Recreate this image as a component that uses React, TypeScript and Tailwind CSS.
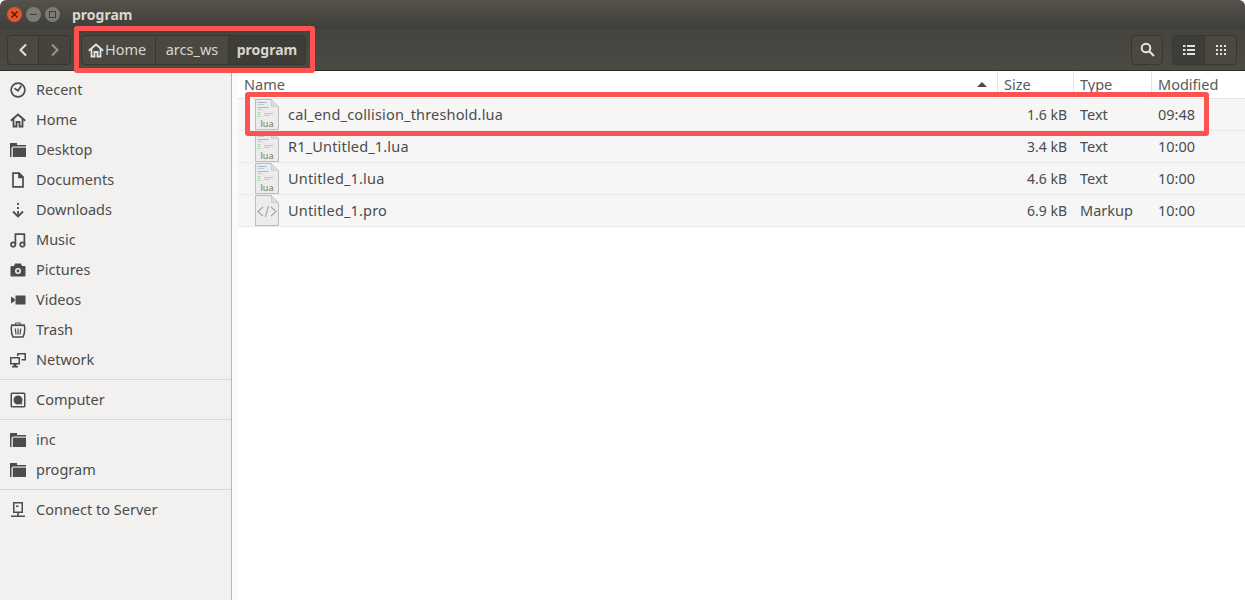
import React from "react";

const Clock = () => (
  <svg width="16" height="16" viewBox="0 0 16 16" fill="none" stroke="#4c4c4c" strokeWidth="1.7">
    <circle cx="8" cy="8" r="6.9" />
    <path d="M4.500 6.200 8 8.800l3.300-5" />
  </svg>
);
const HomeIcon = ({ color = "#4c4c4c" }: { color?: string }) => (
  <svg width="16" height="16" viewBox="0 0 16 16" fill="none" stroke={color} strokeWidth="2">
    <path d="M.8 8.800 8 2.600l7.200 6.200" />
    <path d="M3.500 7v7.500h3V10h3v4.500h3V7" strokeWidth="1.800" />
  </svg>
);
const Folder = () => (
  <svg width="16" height="16" viewBox="0 0 16 16" fill="#4c4c4c">
    <path d="M0 1h7v2h9v1.400H3.500a2 2 0 0 0-2 2V15H0z" />
    <path d="M2.800 5.600H16V15H2.800z" />
  </svg>
);
const Doc = () => (
  <svg width="16" height="16" viewBox="0 0 16 16" fill="none" stroke="#4c4c4c" strokeWidth="1.700">
    <path d="M3 1.200h6.200l3.800 3.800v9.800H3z" />
    <path d="M9 1v4.400h4.200" fill="#4c4c4c" />
  </svg>
);
const Download = () => (
  <svg width="16" height="16" viewBox="0 0 16 16" fill="none" stroke="#4c4c4c" strokeWidth="1.800">
    <path d="M8 1v2M8 5v2M8 9v3.500M3 9.500l5 5 5-5" />
  </svg>
);
const Music = () => (
  <svg width="16" height="16" viewBox="0 0 16 16" fill="none" stroke="#4c4c4c" strokeWidth="1.700">
    <circle cx="3.200" cy="12.600" r="2.200" />
    <circle cx="12.400" cy="12.600" r="2.200" />
    <path d="M5.400 12.600V2.200h9v10.400" />
  </svg>
);
const Camera = () => (
  <svg width="16" height="16" viewBox="0 0 16 16" fill="#4c4c4c">
    <path fillRule="evenodd" d="M5 1.500h6L12 4h2.500a1 1 0 0 1 1 1v8.500a1 1 0 0 1-1 1h-13a1 1 0 0 1-1-1V5a1 1 0 0 1 1-1H4zM8 6a3 3 0 1 0 0 6 3 3 0 0 0 0-6z" />
    <circle cx="8" cy="9" r="1.400" />
  </svg>
);
const Video = () => (
  <svg width="16" height="16" viewBox="0 0 16 16" fill="#4c4c4c">
    <path d="M5.500 3.500H15.500v9H5.500z" />
    <path d="M1 4.500 4.800 7v2L1 11.500z" />
  </svg>
);
const Trash = () => (
  <svg width="16" height="16" viewBox="0 0 16 16" fill="none" stroke="#4c4c4c" strokeWidth="1.200">
    <path d="M1 3.200h14" strokeWidth="1.800" />
    <path d="M5 2.500 6 1h4l1 1.500" />
    <path d="M1.500 4c-.5 4 0 8 1.500 11h10c1.500-3 2-7 1.500-11" strokeWidth="1.500" />
    <path d="M5.300 6.500 6 12.500M8 6.500v6M10.700 6.500 10 12.500" />
  </svg>
);
const NetworkIcon = () => (
  <svg width="16" height="16" viewBox="0 0 16 16" fill="#4c4c4c">
    <path fillRule="evenodd" d="M0 5h10v7.500H6.500V14H8v1.500H2V14h1.500v-1.500H0zM1.500 6.500V11h7V6.500z" />
    <path d="M7 1h9v7.500h-4.500V7H14.500V2.500h-6V4H7z" />
  </svg>
);
const Disk = () => (
  <svg width="16" height="16" viewBox="0 0 16 16" fill="#4c4c4c">
    <path fillRule="evenodd" d="M2 .5h12a1.500 1.500 0 0 1 1.500 1.500v12a1.500 1.500 0 0 1-1.500 1.500H2A1.500 1.500 0 0 1 .5 14V2A1.500 1.500 0 0 1 2 .5zM2 2v12h12V2zM8 3.500a4.500 4.500 0 1 0 0 9 4.500 4.500 0 0 0 0-9z" />
    <circle cx="8" cy="8" r="1.300" />
    <path d="m9 9.500 1.200-.8 2.300 3.300-1.200.8z" />
  </svg>
);
const Server = () => (
  <svg width="16" height="16" viewBox="0 0 16 16" fill="#4c4c4c">
    <path fillRule="evenodd" d="M3 0h10v11H8.800v2.500H15V15H1v-1.500h6.200V11H3zM4.500 1.500v8h7v-8z" />
    <path d="M6 3.500h2.500V5H6z" />
  </svg>
);

// file thumbnail, the text lines of the lua one are just little coloured bars
const FileThumb = ({ kind }: { kind: "lua" | "code" }) => (
  <svg width="24" height="32" viewBox="0 0 24 32" className="block">
    <path d="M.5.500h16l7 7v23H.5z" fill="#ececec" stroke="#bdbdbd" />
    <path d="M16.500.500v7h7z" fill="#dcdcdc" stroke="#cdcdcd" />
    {kind === "lua" ? (
      <g>
        <path d="M2.500 3h9v1h-9z" fill="#a3b8d0" />
        <path d="M2.500 5h7v1h-7z" fill="#bccad9" />
        <path d="M2.500 8h11v1h-11z" fill="#dba0d4" />
        <path d="M2.500 10h5v1h-5z" fill="#bccad9" />
        <path d="M2.500 13h3v1h-3zM2.500 15h3v1h-3zM2.500 17h3v1h-3z" fill="#a9d8a5" />
        <path d="M9 14h9v1H9zM9 16h6v1H9z" fill="#a5cbe6" />
        <text x="12" y="28" textAnchor="middle" fontSize="9" fill="#777777" fontFamily="Noto Sans, sans-serif">lua</text>
      </g>
    ) : (
      <path d="M8 12l-5 4.500 5 4.500M16 12l5 4.500-5 4.500M13.500 11l-3 11" fill="none" stroke="#a4a4a4" strokeWidth="1.100" />
    )}
  </svg>
);

const SideItem = ({ icon, label }: { icon: React.ReactNode; label: string }) => (
  <div className="flex h-[30px] items-center pl-[10px]">
    <span className="flex w-[26px] shrink-0">{icon}</span>
    <span>{label}</span>
  </div>
);
const SideSep = () => <div className="mb-[5px] mt-[4px] h-px bg-[#d9d7d5]" />;

const rows = [
  { name: "cal_end_collision_threshold.lua", size: "1.6 kB", type: "Text", time: "09:48", kind: "lua" as const },
  { name: "R1_Untitled_1.lua", size: "3.4 kB", type: "Text", time: "10:00", kind: "lua" as const },
  { name: "Untitled_1.lua", size: "4.6 kB", type: "Text", time: "10:00", kind: "lua" as const },
  { name: "Untitled_1.pro", size: "6.9 kB", type: "Markup", time: "10:00", kind: "code" as const },
];

export default function App() {
  return (
    <div className="relative flex h-[600px] w-[1245px] flex-col overflow-hidden bg-white text-[14.500px] text-[#4c4c4c] font-['Noto_Sans',sans-serif]">
      {/* TITLEBAR */}
      <div className="flex h-[29px] shrink-0 items-center rounded-t-[6px] bg-gradient-to-b from-[#54524b] to-[#3f3e39] pl-[7px]">
        <div className="flex h-[15px] w-[15px] items-center justify-center rounded-full bg-[#e9552a]">
          <svg width="7" height="7" viewBox="0 0 7 7" stroke="#3c1a0e" strokeWidth="1.300"><path d="M.5.500l6 6M6.500.500l-6 6" /></svg>
        </div>
        <div className="ml-[4px] flex h-[15px] w-[15px] items-center justify-center rounded-full bg-[#7c7b75]">
          <div className="h-[1.500px] w-[7px] bg-[#3e3d39]" />
        </div>
        <div className="ml-[4px] flex h-[15px] w-[15px] items-center justify-center rounded-full bg-[#7c7b75]">
          <div className="h-[7px] w-[7px] border border-[#3e3d39]" />
        </div>
        <span className="ml-[12px] text-[14px] font-bold text-[#d8d6d0]">program</span>
      </div>

      {/* TOOLBAR */}
      <div className="flex h-[42px] shrink-0 items-center border-b border-[#2e2d29] bg-gradient-to-b from-[#45433d] to-[#4c4a44] pl-[7px] pr-[8px]">
        <div className="flex h-[30px] w-[64px] rounded-[4px] border border-[#37362f] bg-[#4a4841]">
          <div className="flex w-[31px] items-center justify-center border-r border-[#37362f]">
            <svg width="10" height="14" viewBox="0 0 10 14" fill="none" stroke="#e6e4de" strokeWidth="2"><path d="M8 1.500 2.500 7 8 12.500" /></svg>
          </div>
          <div className="flex flex-1 items-center justify-center rounded-r-[4px] bg-[#45433c]">
            <svg width="10" height="14" viewBox="0 0 10 14" fill="none" stroke="#96948d" strokeWidth="2"><path d="M2 1.500 7.500 7 2 12.500" /></svg>
          </div>
        </div>
        <div className="ml-[10px] flex h-[30px] rounded-[4px] border border-[#37362f] bg-[#4a4841] text-[#d8d6d0]">
          <div className="flex w-[74px] items-center gap-[1px] border-r border-[#37362f] pl-[6px]">
            <HomeIcon color="#e6e4de" />
            <span>Home</span>
          </div>
          <div className="flex w-[73px] items-center justify-center border-r border-[#37362f]">arcs_ws</div>
          <div className="flex w-[76px] items-center justify-center rounded-r-[4px] bg-[#3f3d37] text-[14px] font-bold">program</div>
        </div>
        <div className="ml-auto flex h-[30px] w-[32px] items-center justify-center rounded-[4px] border border-[#37362f] bg-[#4a4841]">
          <svg width="15" height="15" viewBox="0 0 15 15" fill="none" stroke="#e6e4de" strokeWidth="2"><circle cx="6" cy="6" r="4.300" /><path d="m9.200 9.200 4.800 4.800" /></svg>
        </div>
        <div className="ml-[9px] flex h-[30px] w-[65px] rounded-[4px] border border-[#37362f] bg-[#4a4841]">
          <div className="flex w-[32px] items-center justify-center rounded-l-[4px] border-r border-[#37362f] bg-[#3f3d37]">
            <svg width="12" height="10" viewBox="0 0 12 10" fill="#e6e4de"><path d="M0 0h2.500v2H0zM4 0h8v2H4zM0 4h2.500v2H0zM4 4h8v2H4zM0 8h2.500v2H0zM4 8h8v2H4z" /></svg>
          </div>
          <div className="flex flex-1 items-center justify-center">
            <svg width="10" height="10" viewBox="0 0 10 10" fill="#e6e4de"><path d="M0 0h2v2H0zM4 0h2v2H4zM8 0h2v2H8zM0 4h2v2H0zM4 4h2v2H4zM8 4h2v2H8zM0 8h2v2H0zM4 8h2v2H4zM8 8h2v2H8z" /></svg>
          </div>
        </div>
      </div>

      <div className="flex min-h-0 flex-1">
        {/* SIDEBAR */}
        <aside className="w-[232px] shrink-0 border-r border-[#b8b6b3] bg-[#f2f1f0] pt-[4px]">
          <SideItem icon={<Clock />} label="Recent" />
          <SideItem icon={<HomeIcon />} label="Home" />
          <SideItem icon={<Folder />} label="Desktop" />
          <SideItem icon={<Doc />} label="Documents" />
          <SideItem icon={<Download />} label="Downloads" />
          <SideItem icon={<Music />} label="Music" />
          <SideItem icon={<Camera />} label="Pictures" />
          <SideItem icon={<Video />} label="Videos" />
          <SideItem icon={<Trash />} label="Trash" />
          <SideItem icon={<NetworkIcon />} label="Network" />
          <SideSep />
          <SideItem icon={<Disk />} label="Computer" />
          <SideSep />
          <SideItem icon={<Folder />} label="inc" />
          <SideItem icon={<Folder />} label="program" />
          <SideSep />
          <SideItem icon={<Server />} label="Connect to Server" />
        </aside>

        {/* LIST */}
        <main className="min-w-0 flex-1 bg-[#fafafa] pl-[6px]">
          <div className="h-full bg-white">
            <div className="flex h-[28px] items-center border-b border-[#e4e4e4] text-[#5a5a5a]">
              <div className="flex h-full w-[760px] items-center justify-between border-r border-[#e4e4e4] pl-[6px] pr-[10px]">
                <span>Name</span>
                <svg width="10" height="5" viewBox="0 0 10 5" fill="#4c4c4c"><path d="M5 0l5 5H0z" /></svg>
              </div>
              <div className="flex h-full w-[76px] items-center border-r border-[#e4e4e4] pl-[6px]">Size</div>
              <div className="flex h-full w-[78px] items-center border-r border-[#e4e4e4] pl-[6px]">Type</div>
              <div className="flex h-full items-center pl-[6px]">Modified</div>
            </div>
            {rows.map((r) => (
              <div key={r.name} className="flex h-[32px] items-center border-b border-[#e9e9e9] bg-[#f6f6f6]">
                <div className="flex w-[760px] items-center pl-[17px]">
                  <FileThumb kind={r.kind} />
                  <span className="ml-[9px] tracking-[0.17px]">{r.name}</span>
                </div>
                <div className="w-[76px] pr-[7px] text-right text-[14px]">{r.size}</div>
                <div className="w-[78px] pl-[6px]">{r.type}</div>
                <div className="pl-[6px]">{r.time}</div>
              </div>
            ))}
          </div>
        </main>
      </div>

      {/* RED ANNOTATIONS */}
      <div className="absolute left-[74px] top-[26px] h-[47px] w-[241px] rounded-[3px] border-[5px] border-[#fb5252]" />
      <div className="absolute left-[245px] top-[92px] h-[44px] w-[964px] rounded-[3px] border-[5px] border-[#fb5252]" />
    </div>
  );
}
